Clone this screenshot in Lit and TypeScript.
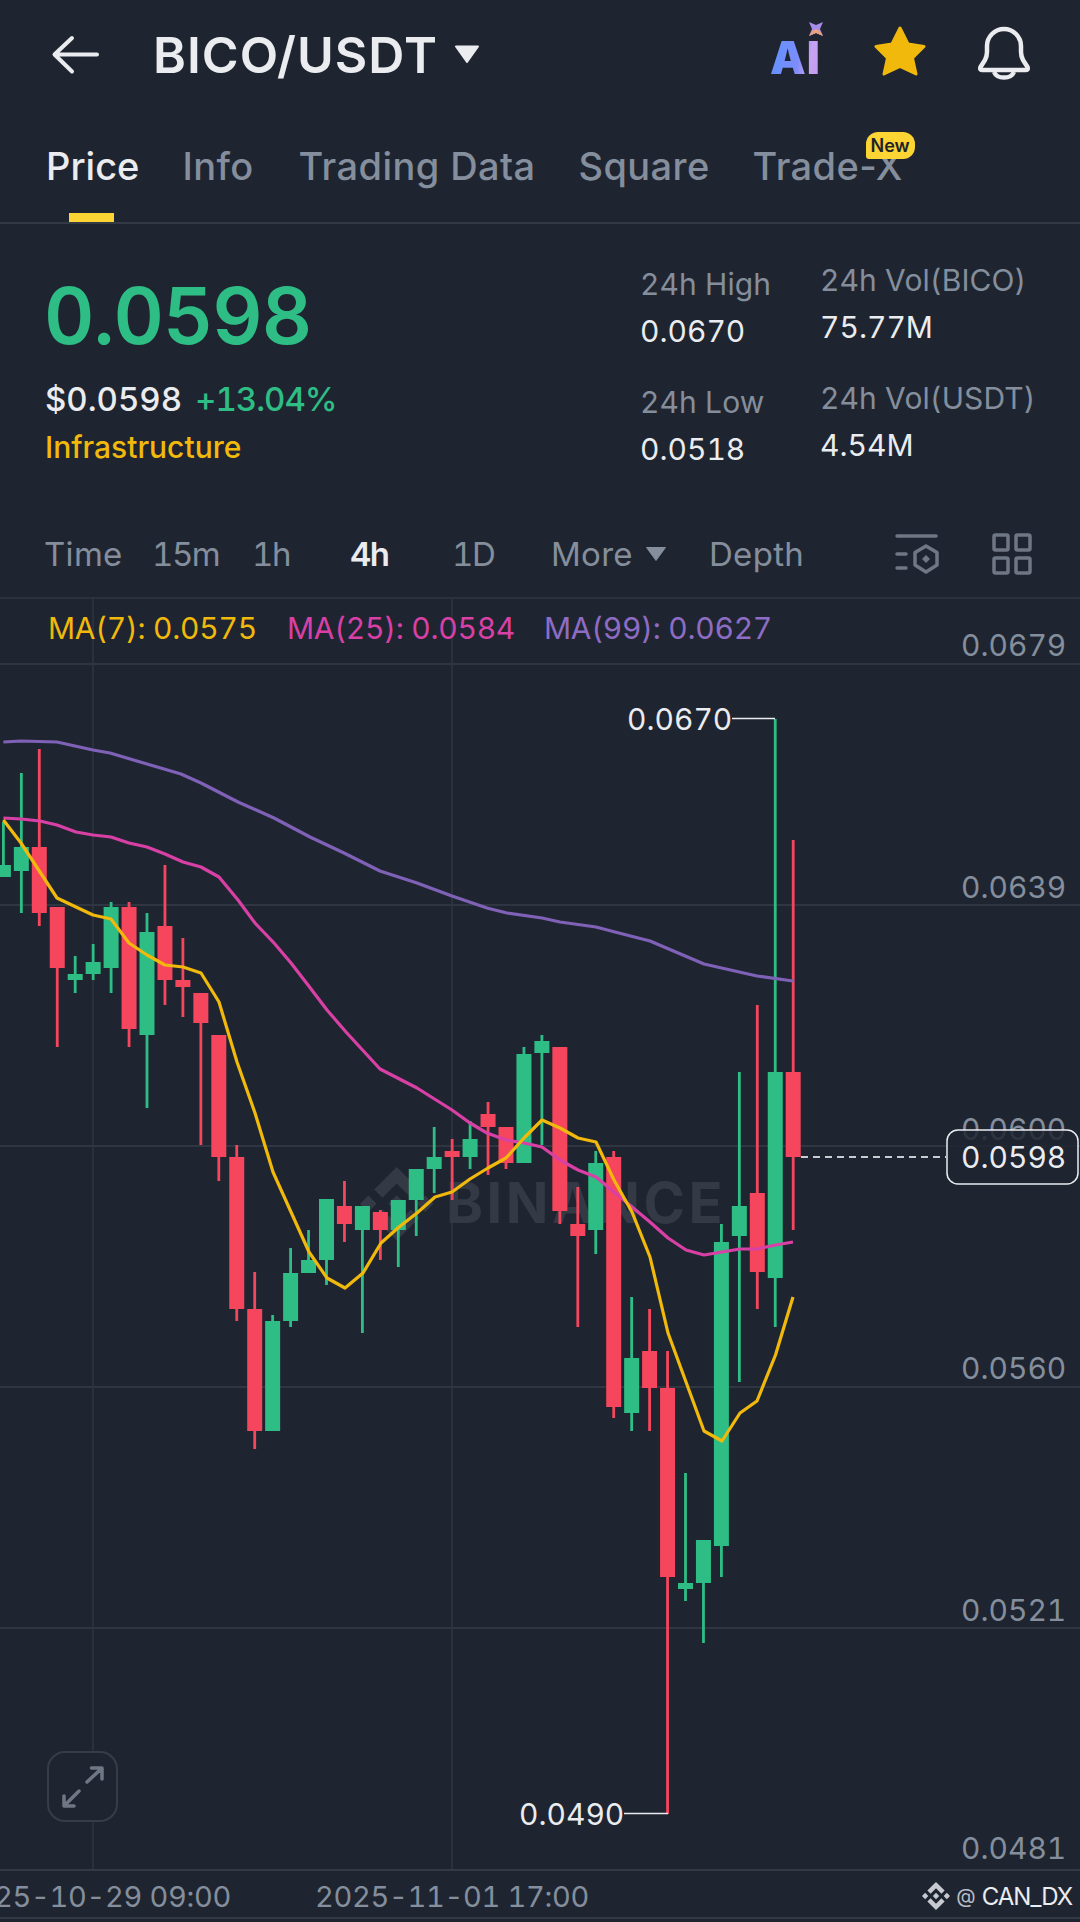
import { LitElement, html, css, svg } from "lit";
import { customElement } from "lit/decorators.js";

type C = [number, number, number, number, number];
// up(1)/down(0), wickTop, wickBottom, bodyTop, bodyBottom (page y)
const CANDLES: C[] = [
  [1, 822, 877, 865, 877], [1, 773, 913, 847, 871], [0, 749, 926, 847, 913], [0, 907, 1047, 907, 968],
  [1, 956, 993, 974, 980], [1, 944, 980, 962, 974], [1, 902, 993, 907, 968], [0, 902, 1047, 907, 1029],
  [1, 913, 1108, 932, 1035], [0, 865, 1005, 926, 980], [0, 938, 1017, 980, 987], [0, 993, 1145, 993, 1023],
  [0, 1035, 1181, 1035, 1157], [0, 1145, 1321, 1157, 1309], [0, 1272, 1449, 1309, 1431], [1, 1315, 1431, 1321, 1431],
  [1, 1248, 1327, 1273, 1321], [1, 1230, 1273, 1260, 1273], [1, 1199, 1285, 1199, 1260], [0, 1181, 1242, 1206, 1224],
  [1, 1206, 1333, 1206, 1230], [0, 1210, 1260, 1212, 1230], [1, 1200, 1267, 1200, 1230], [1, 1169, 1236, 1169, 1200],
  [1, 1127, 1193, 1157, 1169], [0, 1139, 1200, 1151, 1157], [1, 1121, 1169, 1139, 1157], [0, 1102, 1175, 1114, 1127],
  [0, 1127, 1169, 1127, 1163], [1, 1047, 1163, 1054, 1163], [1, 1035, 1145, 1041, 1053], [0, 1047, 1224, 1047, 1211],
  [0, 1187, 1327, 1224, 1236], [1, 1151, 1254, 1163, 1230], [0, 1151, 1418, 1157, 1407], [1, 1297, 1431, 1358, 1413],
  [0, 1309, 1431, 1351, 1388], [0, 1351, 1814, 1388, 1577], [1, 1473, 1601, 1583, 1589], [1, 1540, 1643, 1540, 1583],
  [1, 1224, 1577, 1242, 1546], [1, 1072, 1382, 1206, 1236], [0, 1005, 1309, 1193, 1272], [1, 719, 1327, 1072, 1278],
  [0, 840, 1230, 1072, 1157],
];

const PURPLE = "3.4,742 21,741 57,742 93,750 110,753 147,764 181,774 201,783 238,802 274,818 310,837 344,853 380,871 417,883 452,896 487,908 507,913 542,918 560,922 596,927 615,932 650,941 704,964 757,976 793,981";
const PINK = "3.4,818 21,819 40,821 57,825 76,832 93,835 111,837 129,843 147,847 165,854 183,862 201,867 219,877 238,900 255,923 274,943 291,963 308,985 327,1010 346,1032 380,1069 417,1088 452,1110 470,1123 487,1133 506,1140 524,1143 542,1147 560,1160 578,1170 596,1177 614,1192 632,1207 650,1222 668,1238 686,1250 704,1255 722,1252 740,1249 757,1249 775.5,1245 793,1242";
const YELLOW = "3.4,820 21,843 40,872 57,898 76,907 93,915 111,919 129,943 147,955 165,965 183,967 201,973 219,1002 237,1062 255,1113 273,1172 291,1212 309,1252 327,1278 345,1288 363,1273 381,1243 399,1227 417,1213 435,1197 452,1192 470,1179 488,1168 506,1158 524,1138 542,1120 560,1128 578,1138 596,1142 614,1180 632,1212 650,1257 668,1333 686,1382 704,1431 722,1441 740,1413 757,1401 775.5,1355 793,1297";

const LOGO = "M38.73 53.2l24.59-24.58 24.6 24.6 14.3-14.31L63.32 0 24.43 38.9zM0 63.31l14.3-14.31 14.31 14.31-14.31 14.3zM38.73 73.41l24.59 24.59 24.6-24.6 14.31 14.29-38.9 38.91-38.91-38.88v-.03zM98 63.31l14.3-14.31 14.31 14.3-14.31 14.32zM77.83 63.3L63.32 48.78 52.59 59.51l-1.24 1.23-2.54 2.54 14.51 14.5 14.51-14.47z";

const AXIS: [string, number][] = [["0.0679", 656], ["0.0639", 898], ["0.0600", 1140], ["0.0560", 1379], ["0.0521", 1621], ["0.0481", 1859]];
const GRID_Y = [664, 905, 1146, 1387, 1628];
const TIMES: [string, number, boolean, boolean][] = [["Time", 108, false, false], ["15m", 100, false, true], ["1h", 98, false, true], ["4h", 102, true, true], ["1D", 99, false, true]];

@customElement("app-root")
export class AppRoot extends LitElement {
  static styles = css`
    :host { display: block; width: 1080px; height: 1922px; overflow: hidden; background: #1f2530; font-family: Inter, "Liberation Sans", sans-serif; font-variant-numeric: tabular-nums; color: #eaecef; }
    .header { height: 110px; display: flex; align-items: center; position: relative; }
    .back { width: 50px; height: 40px; margin-left: 51px; flex: none; }
    .title { margin-left: 52px; font-size: 50px; font-weight: 600; letter-spacing: 1px; color: #eaecef; }
    .caret { margin-left: 16px; width: 26px; height: 18px; margin-top: -2px; flex: none; }
    .head-icons { margin-left: auto; display: flex; align-items: flex-start; }
    .ai { position: relative; width: 56px; height: 54px; margin-right: 46px; margin-top: -2px; }
    .ai-text { position: absolute; left: 0; bottom: -2px; font-size: 45px; line-height: 45px; font-weight: 900; letter-spacing: 1px; color: transparent; background: linear-gradient(100deg, #5f93ff 0%, #7d8cfb 55%, #c7a2f2 75%, #c39af0 100%); -webkit-background-clip: text; background-clip: text; }
    .spark { position: absolute; right: 3px; top: -2px; width: 14px; height: 14px; }
    .star { width: 56px; height: 52px; margin-right: 46px; }
    .bell { width: 56px; height: 58px; margin-right: 50px; }
    .tabs { height: 114px; box-sizing: border-box; border-bottom: 2px solid #333a46; display: flex; gap: 43px; padding-left: 46px; font-size: 38px; color: #848e9c; font-weight: 500; letter-spacing: 0.4px; font-variant-numeric: normal; }
    .tab { position: relative; display: flex; align-items: center; height: 112px; }
    .tab.on { color: #eaecef; letter-spacing: 0; }
    .tab.info { margin-right: 2px; }
    .tab.on::after { content: ""; position: absolute; left: 23px; bottom: 0; width: 45px; height: 9px; background: #fcd535; }
    .badge { position: absolute; left: 113px; top: 22px; width: 49px; height: 27px; border-radius: 12px 12px 12px 3px; background: #fcd535; color: #1e2329; font-size: 18px; line-height: 27px; text-align: center; font-weight: 600; letter-spacing: 0; }
    .stats { height: 296px; box-sizing: border-box; display: grid; grid-template-columns: 595px 180px 1fr; padding-left: 45px; }
    .big { margin-top: 47px; margin-left: -1px; font-size: 78px; line-height: 90px; font-weight: 600; color: #2ebd85; letter-spacing: -1px; }
    .sub { margin-top: 18px; font-size: 33px; line-height: 40px; font-weight: 500; display: flex; gap: 13px; }
    .up { color: #2ebd85; letter-spacing: -1px; }
    .cat { margin-top: 8px; font-size: 30px; line-height: 40px; color: #f0b90b; font-weight: 500; }
    .col1 { padding-top: 37px; }
    .col2 { padding-top: 33px; }
    .lab { font-size: 30px; line-height: 46px; color: #848e9c; white-space: nowrap; letter-spacing: 0.1px; }
    .val { font-size: 30px; line-height: 48px; color: #eaecef; margin-bottom: 24px; }
    .bar { height: 79px; box-sizing: border-box; border-bottom: 2px solid #2b323d; padding: 0 0 10px 0; display: flex; align-items: center; font-size: 33px; letter-spacing: 0.3px; color: #848e9c; }
    .item.on { color: #eaecef; font-weight: 600; }
    .item.num { letter-spacing: -1.5px; }
    .more { width: 158px; display: flex; align-items: center; gap: 12px; }
    .tri { width: 22px; height: 16px; flex: none; }
    .bar-icons { margin-left: auto; margin-right: 48px; display: flex; gap: 53px; align-items: center; }
    .ic1 { width: 44px; height: 42px; }
    .ic2 { width: 40px; height: 42px; }
    .chart { position: relative; height: 1270px; }
    .plot { display: block; width: 1080px; height: 1270px; }
    .t { font-family: Inter, "Liberation Sans", sans-serif; }
    .leg { font-size: 30px; letter-spacing: -0.25px; }
    .ax { font-size: 30px; fill: #848e9c; }
    .ext { font-size: 30px; fill: #eaecef; }
    .wm { font-size: 56px; font-weight: 700; fill: #333a45; letter-spacing: 3.5px; }
    .expand { position: absolute; left: 47px; top: 1152px; width: 71px; height: 71px; box-sizing: border-box; border: 2px solid #363d49; border-radius: 18px; background: #1f2530; display: flex; align-items: center; justify-content: center; }
    .expand svg { width: 48px; height: 48px; }
    .foot { height: 50px; box-sizing: border-box; border-top: 2px solid #333a46; border-bottom: 2px solid #333a46; display: flex; align-items: center; font-size: 29px; letter-spacing: -0.3px; color: #848e9c; overflow: hidden; white-space: nowrap; }
    .d1 { margin-left: -43px; margin-top: 4px; flex: none; }
    .d2 { margin-left: 84px; margin-top: 4px; flex: none; }
    .mark { margin-left: auto; margin-right: 8px; margin-top: 4px; display: flex; align-items: center; color: #eaecef; font-size: 24px; letter-spacing: -1px; }
    .mark svg { width: 30px; height: 28px; margin-right: 5px; }
    .at { color: #b7bdc6; margin-right: 6px; font-size: 20px; letter-spacing: 0; }
  `;

  private head() {
    return html`<div class="header">
      <svg class="back" viewBox="0 0 50 40" fill="none" stroke="#eaecef" stroke-width="4" stroke-linecap="round" stroke-linejoin="round">
        <path d="M46 19.500H4M21 3L3.500 19.500L21 36.500" />
      </svg>
      <div class="title">BICO/USDT</div>
      <svg class="caret" viewBox="0 0 26 18"><path d="M2 1.500H24L13 17Z" fill="#eaecef" stroke="#eaecef" stroke-width="2" stroke-linejoin="round" /></svg>
      <div class="head-icons">
        <div class="ai">
          <span class="ai-text">AI</span>
          <svg class="spark" viewBox="0 0 14 14"><path d="M0 0L7 3L14 0L11 7L14 14L7 11L0 14L3 7Z" fill="#a78be8" /><path d="M3 9L7 7L11 9L14 14L7 11L0 14Z" fill="#e8a27c" /></svg>
        </div>
        <svg class="star" viewBox="0 0 56 52"><path d="M28 2L36 18L52 20.500L40.500 32L44 48L28 40.500L12 48L15.500 32L4 20.500L20 18Z" fill="#f0b90b" stroke="#f0b90b" stroke-width="3" stroke-linejoin="round" /></svg>
        <svg class="bell" viewBox="0 0 56 58" fill="none" stroke="#eaecef" stroke-width="4.500" stroke-linejoin="round">
          <path d="M8 44Q5.500 44 6.500 41L11 34Q13 30 13 26V20A17 17 0 0 1 47 20V26Q47 30 49 34L53.500 41Q54.500 44 52 44Z" />
          <path d="M20 46A10.500 8 0 0 0 40 46" />
        </svg>
      </div>
    </div>`;
  }

  private tabs() {
    return html`<div class="tabs">
      <div class="tab on">Price</div>
      <div class="tab info">Info</div>
      <div class="tab">Trading Data</div>
      <div class="tab">Square</div>
      <div class="tab">Trade-X<span class="badge">New</span></div>
    </div>`;
  }

  private stats() {
    return html`<div class="stats">
      <div>
        <div class="big">0.0598</div>
        <div class="sub"><span>$0.0598</span><span class="up">+13.04%</span></div>
        <div class="cat">Infrastructure</div>
      </div>
      <div class="col1">
        <div class="lab">24h High</div><div class="val">0.0670</div>
        <div class="lab">24h Low</div><div class="val">0.0518</div>
      </div>
      <div class="col2">
        <div class="lab">24h Vol(BICO)</div><div class="val">75.77M</div>
        <div class="lab">24h Vol(USDT)</div><div class="val">4.54M</div>
      </div>
    </div>`;
  }

  private bar() {
    return html`<div class="bar">
      <div class="item" style="width:44px"></div>
      ${TIMES.map(([t, w, on, num]) => html`<div class="item ${on ? "on" : ""} ${num ? "num" : ""}" style="width:${w}px">${t}</div>`)}
      <div class="more">More<svg class="tri" viewBox="0 0 22 16"><path d="M1.500 1.500H20.500L11 14.500Z" fill="#848e9c" stroke="#848e9c" stroke-linejoin="round" /></svg></div>
      <div class="item">Depth</div>
      <div class="bar-icons">
        <svg class="ic1" viewBox="0 0 44 42" fill="none" stroke="#6f7785" stroke-width="3.500" stroke-linecap="round" stroke-linejoin="round">
          <path d="M2 3H41M2 21H11M2 35H11" />
          <path d="M31 13L42 19.500V32L31 39L20 32V19.500Z" />
          <path d="M31 22L35 26L31 30L27 26Z" fill="#6f7785" stroke="none" />
        </svg>
        <svg class="ic2" viewBox="0 0 40 42" fill="none" stroke="#6f7785" stroke-width="3.500" stroke-linejoin="round">
          <rect x="2" y="2" width="14" height="15" rx="1.500" /><rect x="24" y="2" width="14" height="15" rx="1.500" />
          <rect x="2" y="25" width="14" height="15" rx="1.500" /><rect x="24" y="25" width="14" height="15" rx="1.500" />
        </svg>
      </div>
    </div>`;
  }

  private plot() {
    const X = (i: number) => 3.4 + i * 17.95;
    return html`<svg class="plot" viewBox="0 599 1080 1270">
      ${GRID_Y.map((y) => svg`<line x1="0" x2="1080" y1=${y} y2=${y} stroke="#2f3642" stroke-width="2" />`)}
      ${[93, 452].map((x) => svg`<line x1=${x} x2=${x} y1="599" y2="1869" stroke="#2f3642" stroke-width="1.500" />`)}
      <g transform="translate(360 1167) scale(0.58)"><path d=${LOGO} fill="#333a45" /></g>
      <text class="t wm" x="446" y="1223">BINANCE</text>
      ${AXIS.map(([t, y]) => svg`<text class="t ax" x="961" y=${y}>${t}</text>`)}
      ${CANDLES.map(([up, wt, wb, bt, bb], i) => {
        const c = up ? "#2ebd85" : "#f6465d";
        const x = X(i);
        return svg`<rect x=${x - 1.4} y=${wt} width="2.800" height=${wb - wt} fill=${c} /><rect x=${x - 7.5} y=${bt} width="15" height=${bb - bt} fill=${c} />`;
      })}
      <polyline points=${PURPLE} fill="none" stroke="#7f62b8" stroke-width="3.200" stroke-linejoin="round" />
      <polyline points=${PINK} fill="none" stroke="#d940a5" stroke-width="3.200" stroke-linejoin="round" />
      <polyline points=${YELLOW} fill="none" stroke="#f0b90b" stroke-width="3.200" stroke-linejoin="round" />
      <text class="t leg" x="48" y="639" fill="#f0b90b">MA(7): 0.0575</text>
      <text class="t leg" x="287" y="639" fill="#d940a5">MA(25): 0.0584</text>
      <text class="t leg" x="544" y="639" fill="#8e6cc4">MA(99): 0.0627</text>
      <text class="t ext" x="627" y="730">0.0670</text>
      <path d="M732 718.500H775" stroke="#eaecef" stroke-width="1.500" />
      <text class="t ext" x="519" y="1825">0.0490</text>
      <path d="M624 1813.500H668" stroke="#eaecef" stroke-width="1.500" />
      <line x1="801" x2="946" y1="1157" y2="1157" stroke="#c9ccd1" stroke-width="2" stroke-dasharray="7 5" />
      <rect x="947" y="1130" width="131" height="54" rx="11" fill="#1f2530" fill-opacity="0.85" stroke="#eaecef" stroke-width="1.500" />
      <text class="t ext" x="961" y="1168">0.0598</text>
    </svg>`;
  }

  render() {
    return html`
      ${this.head()}
      ${this.tabs()}
      ${this.stats()}
      ${this.bar()}
      <div class="chart">
        ${this.plot()}
        <div class="expand">
          <svg viewBox="0 0 48 48" fill="none" stroke="#6f7785" stroke-width="3.500" stroke-linecap="round" stroke-linejoin="round">
            <path d="M28 19L42 6M32.500 5H43V16M20 28L6 42M5 33V43H15" />
          </svg>
        </div>
      </div>
      <div class="foot">
        <span class="d1">2025-10-29 09:00</span>
        <span class="d2">2025-11-01 17:00</span>
        <span class="mark">
          <svg viewBox="0 0 126.610 126.610"><path d=${LOGO} fill="#c7cbd1" /></svg>
          <span class="at">@</span>CAN_DX
        </span>
      </div>
    `;
  }
}
